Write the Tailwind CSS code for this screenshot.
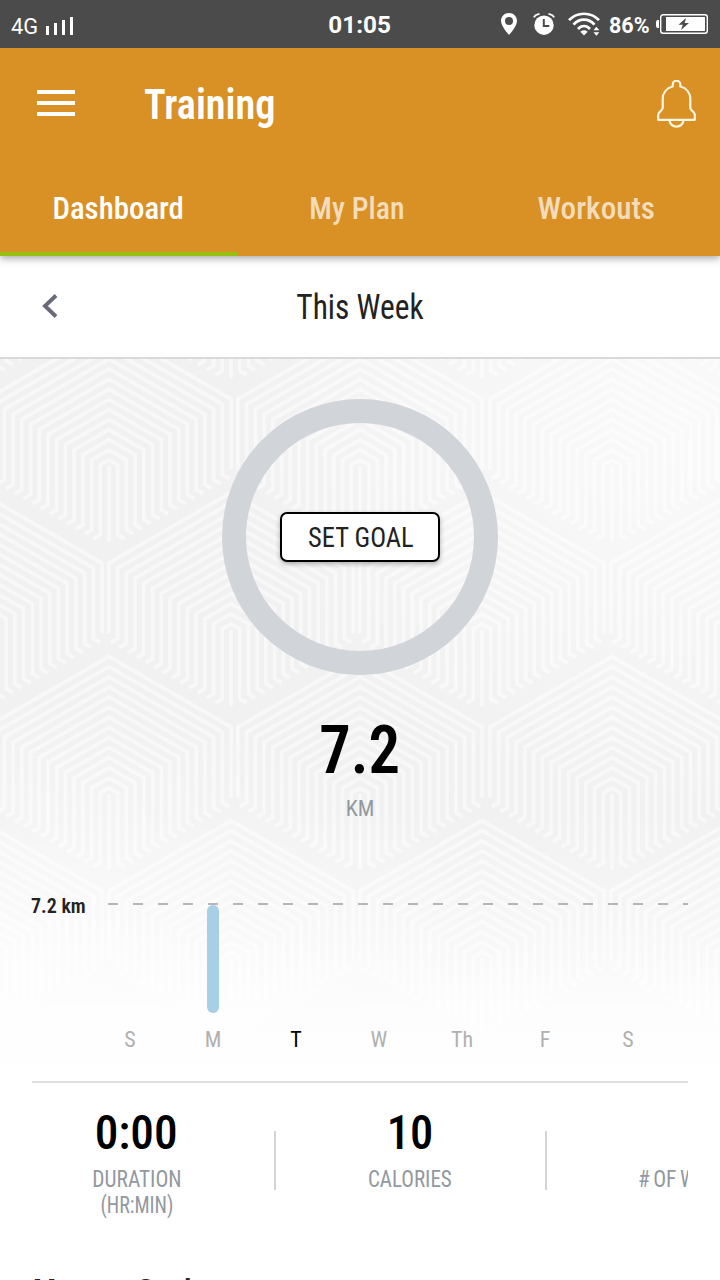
<!DOCTYPE html>
<html lang="en">
<head>
<meta charset="utf-8">
<title>Training</title>
<script src="https://cdn.jsdelivr.net/npm/@tailwindcss/browser@4"></script>
</head>
<body class="bg-white">
<div class="w-[720px] h-[1280px] overflow-hidden flex flex-col bg-white font-['Roboto_Condensed',Roboto,sans-serif] whitespace-nowrap">

  <!-- Status bar -->
  <div class="relative z-20 h-12 shrink-0 bg-[#4b4b4b] text-white grid grid-cols-[240px_240px_240px] font-[Roboto,sans-serif]">
    <div class="flex items-center pl-[11px] pt-[6px]">
      <span class="text-[22px] leading-[42px] w-[34px]"><span class="inline-block origin-left scale-x-[.99]">4G</span></span>
      <svg class="w-7 h-[18px] -mt-[2px]" viewBox="0 0 28 18" fill="#fff"><path d="M1 9h3v9H1zM9 6h3v12H9zM17 3h3v15h-3zM25 0h3v18h-3z"/></svg>
    </div>
    <div class="flex items-center justify-center pt-[3px] text-[24.500px] font-bold"><span class="scale-x-[.99]">01:05</span></div>
    <div class="flex items-center justify-end pr-3">
      <svg class="w-4 h-[22px]" viewBox="0 0 16 22"><path fill="#fff" fill-rule="evenodd" d="M8 0C3.500 0 0 3.500 0 7.800 0 13.500 8 22 8 22s8-8.500 8-14.200C16 3.500 12.500 0 8 0zm0 4a4 4 0 1 1 0 8 4 4 0 0 1 0-8z"/></svg>
      <svg class="w-[22px] h-[22px] ml-4" viewBox="0 0 22 22"><circle cx="11" cy="12.200" r="9.700" fill="#fff"/><path d="M10.800 6v7h5.500" fill="none" stroke="#4b4b4b" stroke-width="2"/><path fill="#fff" d="M.5 4.500C1.500 1.500 4 0 7 .6 4 1.500 2 3 .5 4.500zM21.500 4.500C20.500 1.500 18 0 15 .6c3 .9 5 2.400 6.500 3.900z"/><path d="M.8 4.300Q2.500 1.500 6.500 1M21.200 4.300Q19.500 1.500 15.500 1" fill="none" stroke="#fff" stroke-width="1.600"/></svg>
      <svg class="w-8 h-6 ml-[13px]" viewBox="0 0 32 24"><g fill="none" stroke="#fff" stroke-width="2.700"><path d="M1 8.200C9-.4 23-.4 31 8.200"/><path d="M5.500 12.600C11.500 6 20.500 6 26.500 12.600"/><path d="M10 17C13.500 13 18.500 13 22 17"/></g><path fill="#fff" d="M12.300 19.700q3.700-2.800 7.400 0L16 23.600zM25.500 18.300l2.900-3.500 2.900 3.500zM25.500 20.200l2.900 3.500 2.900-3.500z"/></svg>
      <span class="text-[21.500px] font-bold ml-[9px] mt-[3px] w-[41px] leading-8">86%</span>
      <svg class="w-[52px] h-5 ml-[6px]" viewBox="0 0 52 20"><path fill="#fff" d="M3 6v8H2Q0 14 0 12V8q0-2 2-2zM10 3h39v14H10z"/><rect x="4.700" y=".7" width="46.600" height="18.600" rx="2.500" fill="none" stroke="#fff" stroke-width="1.400"/><path fill="#4b4b4b" d="M30 4l-7.500 6.800h4.300L25 16l8-7h-4.300z"/></svg>
    </div>
  </div>

  <!-- App header -->
  <header class="h-[208px] shrink-0 bg-[#d99024] text-white flex flex-col relative z-10 shadow-[0_2px_8px_rgba(0,0,0,0.38)]">
    <div class="h-28 flex items-center pl-[37px] pr-[24px]">
      <svg class="w-[38px] h-[26px] -mt-[2px]" viewBox="0 0 38 26" fill="#fff"><path d="M0 0h38v4H0zM0 11h38v4H0zM0 22h38v4H0z"/></svg>
      <h1 class="text-[42px] font-semibold ml-[69px] origin-left scale-x-[.96]">Training</h1>
      <svg class="w-[39px] h-12 ml-auto -mt-px" viewBox="0 0 39 48" fill="none" stroke="#fff6e4" stroke-width="2.200" stroke-linejoin="round"><path d="M15.700 6.500V4.500a3.800 3.800 0 0 1 7.600 0v2C29.500 8 33.300 13 33.300 19v9c0 2.500 4.500 3.800 4.500 6.500v5.300H1.200v-5.300c0-2.700 4.500-4 4.500-6.500v-9c0-6 3.800-11 10-12.500z"/><path d="M12.300 40c.8 4 3.700 6.600 7.200 6.600s6.400-2.600 7.200-6.600"/></svg>
    </div>
    <nav class="h-24 grid grid-cols-[238px_238px_244px] text-[32px] font-medium">
      <div class="flex items-center justify-center border-b-4 border-[#97c010] pt-1 pr-[2px]"><span class="scale-x-[.965]">Dashboard</span></div>
      <div class="flex items-center justify-center text-white/70"><span class="scale-x-[.935]">My Plan</span></div>
      <div class="flex items-center justify-center text-white/70 pr-[3px]"><span class="scale-x-[.975]">Workouts</span></div>
    </nav>
  </header>

  <!-- Week selector -->
  <div class="h-[103px] shrink-0 border-b-2 border-[#d9d9d9] grid grid-cols-[1fr_auto_1fr] items-center">
    <svg class="w-4 h-6 ml-[42px] -mt-[2px]" viewBox="0 0 16 24" fill="none" stroke="#6a6b78" stroke-width="3.900"><path d="M14 1.500L3 12l11 10.500"/></svg>
    <span class="text-[34.500px] text-[#222] scale-x-[.91] pt-[2px]">This Week</span>
  </div>

  <!-- Summary over the patterned backdrop -->
  <section class="relative h-[722px] shrink-0 flex flex-col items-center">
    <div class="absolute inset-0 bg-[#f1f1f1]">
      <svg class="absolute inset-0 w-full h-full" viewBox="0 359 720 722"><path id="hex" fill="none" stroke="#f8f8f8" stroke-width="3.700"/></svg>
      <div class="absolute inset-0 bg-[radial-gradient(ellipse_460px_400px_at_95%_8%,rgba(255,255,255,0.65),rgba(255,255,255,0))]"></div>
      <div class="absolute inset-0 bg-[linear-gradient(to_bottom,rgba(255,255,255,0)_62%,rgba(255,255,255,0.35)_77%,rgba(255,255,255,0.85)_90%,#fff_100%)]"></div>
      <div class="absolute inset-0 bg-[radial-gradient(ellipse_520px_280px_at_0%_85%,rgba(255,255,255,0.55),rgba(255,255,255,0))]"></div>
    </div>

    <div class="relative mt-10 w-[276px] h-[276px] rounded-full border-[24px] border-[#d1d4d9] flex items-center justify-center">
      <button class="w-40 h-[50px] shrink-0 bg-white border-2 border-black rounded-[7px] shadow-[0_2px_5px_rgba(0,0,0,0.3)] text-[28px] text-[#222] flex items-center justify-center pt-[2px] pl-px"><span class="scale-x-[.945]">SET GOAL</span></button>
    </div>
    <div class="relative mt-[36px] h-20 leading-[80px] text-[66px] font-semibold text-black scale-x-[.95]">7.2</div>
    <div class="relative mt-1 h-7 leading-7 text-[22px] text-[#9298a0]">KM</div>

    <div class="relative mt-20 w-full flex">
      <div class="w-[88.500px] h-7 leading-7 -mt-[11px] pl-[30.500px] text-[20.500px] font-semibold text-[#222]"><span class="inline-block origin-left scale-x-[.975]">7.2 km</span></div>
      <div class="w-[599.500px]">
        <svg class="block h-[2px] w-[580px] ml-[19px]" viewBox="0 0 580 2"><path d="M0 1H580" stroke="#b5b7b6" stroke-width="2" stroke-dasharray="10 15"/></svg>
        <div class="grid grid-cols-[repeat(7,83px)] justify-items-center text-[22px] leading-[54px] text-[#b0b0b0]">
          <div class="h-[108px]"></div><div class="h-[108px] w-3 rounded-full bg-[#a7cfe7]"></div><div></div><div></div><div></div><div></div><div></div>
          <span>S</span><span>M</span><span class="text-black">T</span><span>W</span><span>Th</span><span>F</span><span>S</span>
        </div>
      </div>
    </div>
  </section>

  <div class="mx-8 h-[189px] shrink-0 border-t-2 border-[#e0e0e0] pt-[22px] flex overflow-hidden">
    <div class="w-[209px] shrink-0 flex flex-col items-center">
      <div class="h-14 leading-[56px] text-[48px] font-medium scale-x-[.985]">0:00</div>
      <div class="mt-[6px] text-[23px] leading-[26px] text-[#9298a0] flex flex-col items-center"><span class="scale-x-[.93]">DURATION</span><span class="scale-x-[.87]">(HR:MIN)</span></div>
    </div>
    <div class="w-[2px] h-[59px] mt-[26px] ml-[33px] shrink-0 bg-[#d1d4d9]"></div>
    <div class="w-[269px] pr-px shrink-0 flex flex-col items-center">
      <div class="h-14 leading-[56px] text-[48px] font-medium scale-x-[.97]">10</div>
      <div class="mt-[6px] text-[23px] leading-[26px] text-[#9298a0] scale-x-[.915]">CALORIES</div>
    </div>
    <div class="w-[2px] h-[59px] mt-[26px] shrink-0 bg-[#d1d4d9]"></div>
    <div class="shrink-0 pl-[91px] pt-[62px] text-[23px] leading-[26px] text-[#9298a0] [word-spacing:-1.5px]"><span class="inline-block origin-left scale-x-[.93]"># OF WORKOUTS</span></div>
  </div>

  <h2 class="shrink-0 pl-[33px] h-10 leading-[40px] text-[30px] font-semibold text-[#222]"><span class="inline-block origin-left scale-x-[1.015]">Manage Goals</span></h2>
</div>
<script>
  // Nested-hexagon backdrop: columns of concentric arches, alternate columns shifted by half a period.
  const s = 8.72, slope = 0.577, period = 328;
  let d = '';
  [[-20, 164], [109, 0], [231, 164], [360, 0], [482, 164], [612, 0], [733, 164]].forEach(([cx, off]) => {
    for (let a = 142 + off - period; a < 1100; a += period) {
      d += `M${cx} ${a - 4}V${a + 72}`;
      for (let k = 1; k <= 14; k++) {
        const w = s * k, top = a - 10.1 * k;
        const end = a + 70 - slope * w, shoulder = top + slope * w, hook = k === 14 ? 0 : 7;
        d += `M${cx - w - hook} ${end + hook * slope}L${cx - w} ${end}V${shoulder}L${cx} ${top}L${cx + w} ${shoulder}V${end}L${cx + w + hook} ${end + hook * slope}`;
      }
    }
  });
  document.getElementById('hex').setAttribute('d', d);
</script>
</body>
</html>
